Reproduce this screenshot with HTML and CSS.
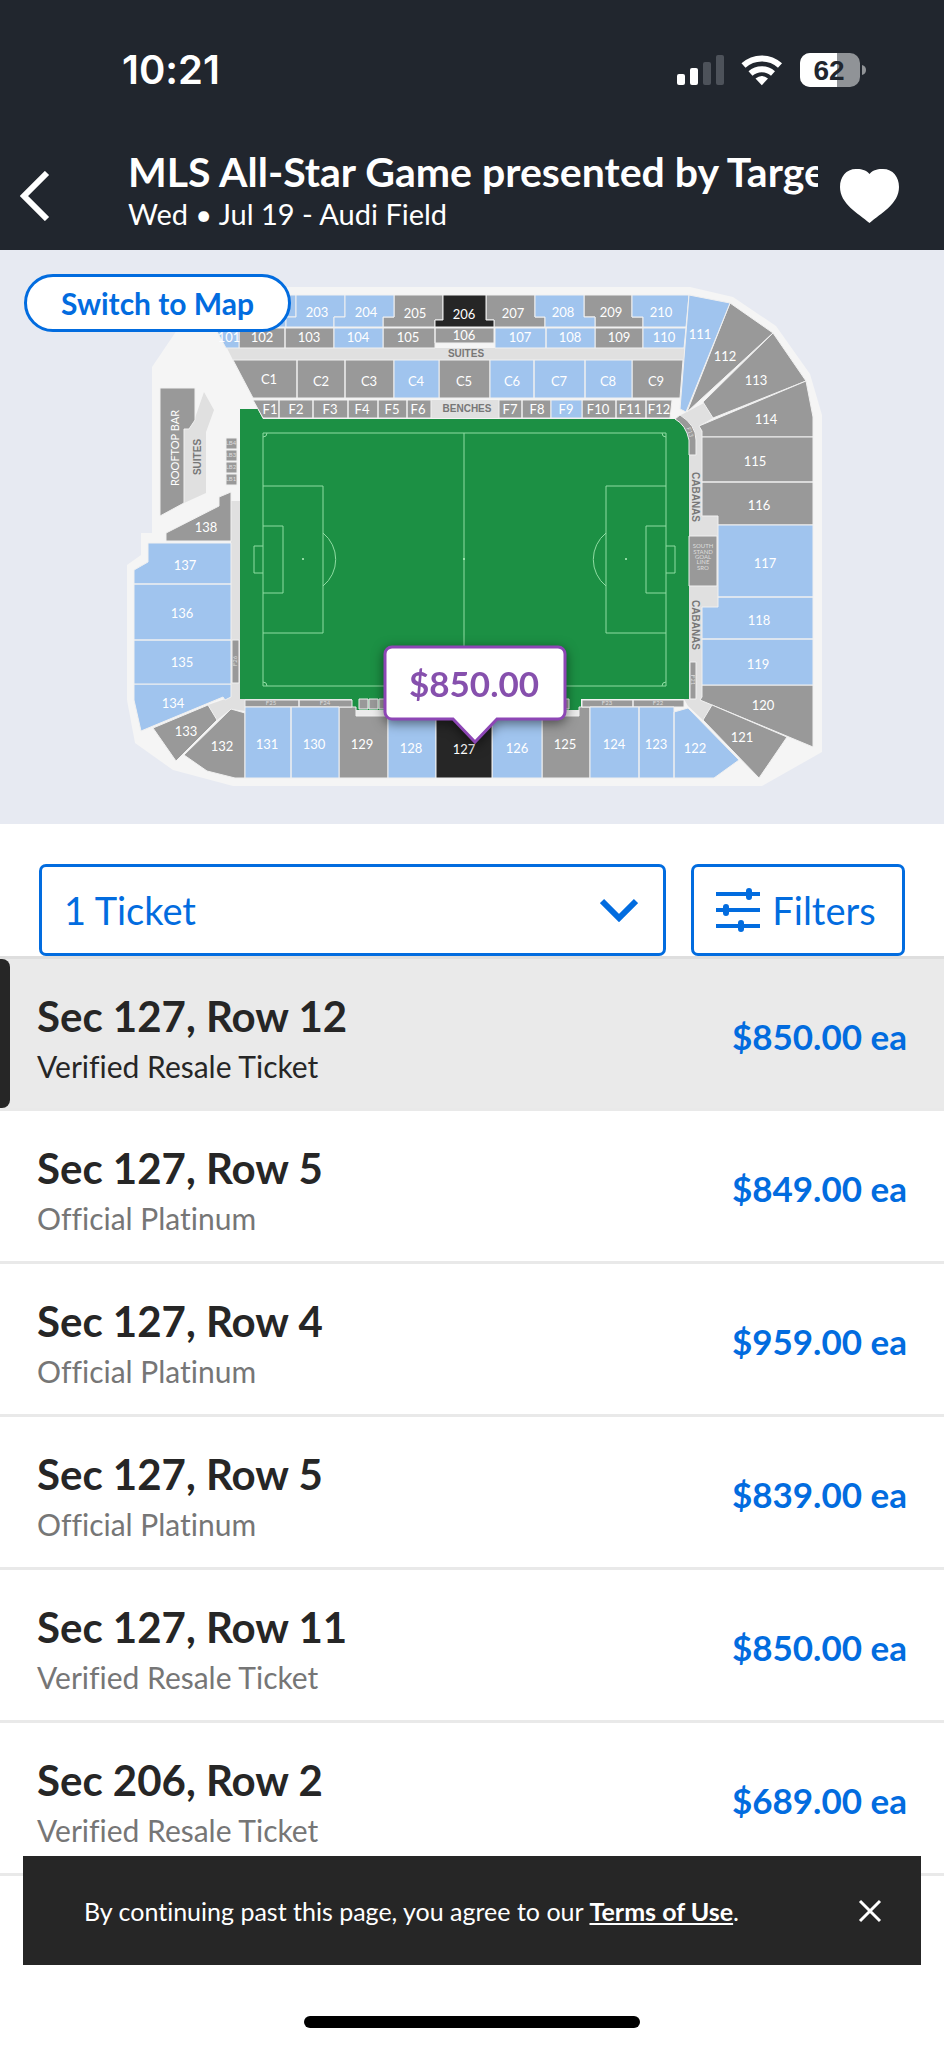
FILE: index.html
```
<!DOCTYPE html>
<html lang="en">
<head>
    <meta charset="UTF-8">
    <meta name="viewport" content="width=device-width, initial-scale=1.0">
    <title>MLS All-Star Game presented by Target</title>
    <link rel="stylesheet" href="styles.css">
</head>
<body>
    <header class="top">
        <div class="status">
            <span class="clock">10:21</span>
            <svg class="status-icons" width="190" height="36" viewBox="677 52 190 36">
                <rect x="677" y="74" width="8" height="11" rx="2" fill="#fff"/>
                <rect x="690" y="68" width="8" height="17" rx="2" fill="#fff"/>
                <rect x="703" y="62" width="8" height="23" rx="2" fill="#4d525a"/>
                <rect x="716" y="55" width="8" height="30" rx="2" fill="#4d525a"/>
                <g fill="none" stroke="#fff" stroke-width="6">
                    <path d="M743.500 65.500a27 27 0 0 1 36.500 0"/>
                    <path d="M750.500 73.500a17 17 0 0 1 22.500 0"/>
                </g>
                <path d="M755.500 78.500q6.200-5 12.500 0l-6.200 6.800z" fill="#fff"/>
                <rect x="800" y="53" width="60" height="34" rx="10" fill="#909397"/>
                <path d="M810 53h27v34h-27a10 10 0 0 1-10-10v-14a10 10 0 0 1 10-10z" fill="#fff"/>
                <path d="M862 65q4 1 4 5t-4 5z" fill="#909397"/>
                <text class="battery" x="829" y="80">62</text>
            </svg>
        </div>
        <div class="bar">
            <button class="icon-button" type="button" aria-label="Back">
                <svg width="30" height="50" viewBox="0 0 30 50"><path d="M27 2 4 25l23 23" fill="none" stroke="#fff" stroke-width="6"/></svg>
            </button>
            <div class="event">
                <h1>MLS All-Star Game presented by Target</h1>
                <p>Wed • Jul 19 - Audi Field</p>
            </div>
            <button class="icon-button" type="button" aria-label="Favorite">
                <svg width="60" height="54" viewBox="0 0 60 54"><path d="M29.500 5C25 0 20 0 16 0 6 0 0 8 0 18 0 35 18 44 29.500 54 41 44 59 35 59 18 59 8 53 0 43 0 39 0 34 0 29.500 5z" fill="#fff"/></svg>
            </button>
        </div>
    </header>

    <section class="map">
        <svg class="seats" viewBox="0 250 944 574" role="img" aria-label="Audi Field seat map">
            <!-- stadium outline -->
            <path class="ground" d="M200 287H690L733 297 776 326 810 374 822 415V752L762 786H233L173 770 135 743 127 700V565L141 555V533H152V367L175 333z"/>

            <!-- suites, benches and cabanas -->
            <g class="lounge">
                <path d="M227 348H684V360H233zM431 400H499V418H431z"/>
                <path d="M204 392 214 410 206 432V493L184 503V430L195 418z"/>
                <path d="M231 501H240V699H352V716H245V711L231 709 217 720 208 705 231 697z"/>
                <path d="M677 417 704 403 713 418 699 426 702 432V516H718V607H702V697L700 700 712 705 703 720 688 706 684 699H689V441z"/>
            </g>

            <!-- pitch -->
            <path class="grass" d="M240 409H258L263 419H675Q689 425 689 441V699H581V710H352V699H240z"/>
            <path class="apron" d="M356 710H579V716H356z"/>
            <g class="lines">
                <path d="M263 433H666V686H263zM464 433V686"/>
                <path d="M263 486H323V633H263M263 526H283V593H263M263 546H254V573H263M323 533a34 34 0 0 1 0 53"/>
                <path d="M666 486H606V633H666M666 526H646V593H666M666 546H675V573H666M606 533a34 34 0 0 0 0 53"/>
                <path d="M263 437a4 4 0 0 0 4-4M662 433a4 4 0 0 0 4 4M263 682a4 4 0 0 1 4 4M662 686a4 4 0 0 1 4-4"/>
            </g>
            <g fill="#b5f0c0">
                <circle cx="303" cy="559" r="1"/>
                <circle cx="464" cy="559" r="1"/>
                <circle cx="626" cy="559" r="1"/>
            </g>

            <g class="sold">
                <path d="M394 295H443V320H435V327H383V317H394z"/>
                <path d="M486 295H535V317H545V327H494V320H486z"/>
                <path d="M584 295H632V317H643V327H595V317H584z"/>
                <path d="M239 328H285V348H239zM285 328H334V348H285zM383 328H435V348H383zM435 328H494V343H435zM595 328H643V348H595z"/>
                <path d="M233 360H297V398H253zM297 360H345V398H297zM345 360H394V398H345zM439 360H490V398H439zM632 360H683L680 398H632z"/>
                <path d="M253 400H279V418H263zM279 400H313V418H279zM313 400H348V418H313zM348 400H378V418H348zM378 400H407V418H378zM407 400H431V418H407z"/>
                <path d="M499 400H522V418H499zM522 400H551V418H522zM582 400H616V418H582zM616 400H646V418H616zM646 400H672L670 418H646z"/>
                <path d="M730 303 773 333 687 412z"/>
                <path d="M773 333 806 381 713 418 703 402z"/>
                <path d="M806 381 813 417V437H702V431L699 426z"/>
                <path d="M702 437H813V482H702zM702 482H813V525H718V516H702z"/>
                <path d="M702 685H813V747L700 700 702 697z"/>
                <path d="M712 705 787 737 759 778 703 720z"/>
                <path d="M542 716H579V707H590V778H542z"/>
                <path d="M339 707H356V716H388V778H339z"/>
                <path d="M231 709 245 713V778H235L207 771 184 755z"/>
                <path d="M208 705 217 720 176 761 153 728z"/>
                <path d="M231 541H166V533L219 506V497L231 492z"/>
                <path d="M160 388H195V420L189 429H184V503L160 516z"/>
                <path d="M226 438H237V449H226zM226 450H237V461H226zM226 462H237V473H226zM226 474H237V485H226z"/>
                <path d="M232 640H239V683H232zM245 700H299V707H245zM299 700H352V707H299zM582 700H633V707H582zM633 700H684V707H633z"/>
                <path d="M359 699H368V709H359zM369 699H378V709H369zM379 699H388V709H379zM560 699H569V709H560z"/>
                <path d="M689 536H717V586H689zM690 662H696V699H690z"/>
                <path d="M680 415Q696 425 696 440V455H689V440Q686 425 675 419z"/>
            </g>
            <g class="open">
                <path d="M250 295H296V317H286V327H250z"/>
                <path d="M296 295H345V317H334V327H286V317H296z"/>
                <path d="M345 295H394V317H383V327H334V317H345z"/>
                <path d="M535 295H584V317H595V327H545V317H535z"/>
                <path d="M632 295H689L686 327H643V317H632z"/>
                <path d="M215 328H239V348H226zM334 328H383V348H334zM495 328H546V348H495zM546 328H595V348H546zM643 328H686L684 348H643z"/>
                <path d="M394 360H439V398H394zM490 360H534V398H490zM534 360H585V398H534zM585 360H632V398H585zM551 400H582V418H551z"/>
                <path d="M689 295 730 303 686 412 680 409z"/>
                <path d="M718 525H813V597H718zM718 597H813V639H702V607H718zM702 639H813V685H702z"/>
                <path d="M674 712 688 708 739 760 714 778H674zM639 707H674V778H639zM590 707H639V778H590z"/>
                <path d="M492 716H542V778H492zM388 716H436V778H388zM291 707H339V778H291zM245 707H291V778H245z"/>
                <path d="M134 684H231V697L225 700 223 697 141 731 134 700z"/>
                <path d="M134 640H231V684H134zM134 584H231V640H134zM148 543H231V584H134V570L148 562z"/>
            </g>
            <g class="picked">
                <path d="M443 295H486V320H494V327H435V320H443z"/>
                <path d="M436 716H492V778H436z"/>
            </g>

            <g class="labels">
                <text x="317" y="317">203</text><text x="366" y="317">204</text><text x="415" y="318">205</text>
                <text x="464" y="319">206</text><text x="513" y="318">207</text><text x="563" y="317">208</text>
                <text x="611" y="317">209</text><text x="661" y="317">210</text>
                <text x="229" y="342">101</text><text x="262" y="342">102</text><text x="309" y="342">103</text>
                <text x="358" y="342">104</text><text x="408" y="342">105</text><text x="464" y="340">106</text>
                <text x="520" y="342">107</text><text x="570" y="342">108</text><text x="619" y="342">109</text>
                <text x="664" y="342">110</text>
                <text x="269" y="384">C1</text><text x="321" y="386">C2</text><text x="369" y="386">C3</text>
                <text x="416" y="386">C4</text><text x="464" y="386">C5</text><text x="512" y="386">C6</text>
                <text x="559" y="386">C7</text><text x="608" y="386">C8</text><text x="656" y="386">C9</text>
                <text x="270" y="414">F1</text><text x="296" y="414">F2</text><text x="330" y="414">F3</text>
                <text x="362" y="414">F4</text><text x="392" y="414">F5</text><text x="418" y="414">F6</text>
                <text x="510" y="414">F7</text><text x="537" y="414">F8</text><text x="566" y="414">F9</text>
                <text x="598" y="414">F10</text><text x="630" y="414">F11</text><text x="659" y="414">F12</text>
                <text x="700" y="339">111</text><text x="725" y="361">112</text><text x="756" y="385">113</text>
                <text x="766" y="424">114</text><text x="755" y="466">115</text><text x="759" y="510">116</text>
                <text x="765" y="568">117</text><text x="759" y="625">118</text><text x="758" y="669">119</text>
                <text x="763" y="710">120</text><text x="742" y="742">121</text><text x="695" y="753">122</text>
                <text x="656" y="749">123</text><text x="614" y="749">124</text><text x="565" y="749">125</text>
                <text x="517" y="753">126</text><text x="464" y="754">127</text><text x="411" y="753">128</text>
                <text x="362" y="749">129</text><text x="314" y="749">130</text><text x="267" y="749">131</text>
                <text x="222" y="751">132</text><text x="186" y="736">133</text><text x="173" y="708">134</text>
                <text x="182" y="667">135</text><text x="182" y="618">136</text><text x="185" y="570">137</text>
                <text x="206" y="532">138</text>
                <text class="rooftop" transform="translate(179 448) rotate(-90)">ROOFTOP BAR</text>
            </g>
            <g class="places">
                <text x="466" y="357">SUITES</text>
                <text x="467" y="412">BENCHES</text>
                <text transform="translate(201 457) rotate(-90)">SUITES</text>
                <text transform="translate(692 497) rotate(90)">CABANAS</text>
                <text transform="translate(692 625) rotate(90)">CABANAS</text>
            </g>
            <g class="tiny">
                <text x="231" y="445">LB4</text><text x="231" y="457">LB3</text><text x="231" y="469">LB2</text><text x="231" y="481">LB1</text>
                <text x="271" y="705">F25</text><text x="325" y="705">F24</text><text x="607" y="705">F23</text><text x="658" y="705">F22</text>
                <text transform="translate(237 661) rotate(-90)">F26</text>
                <text transform="translate(691 680) rotate(90)">F21</text>
                <text transform="translate(688 433) rotate(70)">F13</text>
                <text x="703" y="548">SOUTH</text><text x="703" y="554">STAND</text><text x="703" y="559">GOAL</text>
                <text x="703" y="564">LINE</text><text x="703" y="570">SRO</text>
            </g>

            <g class="price-pin">
                <path d="M392 647H558a7 7 0 0 1 7 7V712a7 7 0 0 1-7 7H497L475 742 453 719H392a7 7 0 0 1-7-7V654a7 7 0 0 1 7-7z"/>
                <text x="474" y="697">$850.00</text>
            </g>
        </svg>
        <button class="map-switch" type="button">Switch to Map</button>
    </section>

    <main>
        <form class="controls">
            <div class="quantity">
                <select aria-label="Number of tickets">
                    <option>1 Ticket</option>
                    <option>2 Tickets</option>
                    <option>3 Tickets</option>
                    <option>4 Tickets</option>
                </select>
                <svg class="chevron" width="38" height="24" viewBox="0 0 38 24"><path d="M2 3 19 20 36 3" fill="none" stroke="#026cdf" stroke-width="6"/></svg>
            </div>
            <button class="filters" type="button">
                <svg width="44" height="44" viewBox="0 0 44 44" fill="none" stroke="#026cdf" stroke-width="4">
                    <path d="M0 6h44M0 22h44M0 38h44"/>
                    <path d="M33 3v6M10 19v6M25 35v6" stroke-width="6" stroke-linecap="round"/>
                </svg>
                Filters
            </button>
        </form>

        <ul class="tickets">
            <li class="selected">
                <div><h2>Sec 127, Row 12</h2><p>Verified Resale Ticket</p></div>
                <span class="price">$850.00 ea</span>
            </li>
            <li>
                <div><h2>Sec 127, Row 5</h2><p>Official Platinum</p></div>
                <span class="price">$849.00 ea</span>
            </li>
            <li>
                <div><h2>Sec 127, Row 4</h2><p>Official Platinum</p></div>
                <span class="price">$959.00 ea</span>
            </li>
            <li>
                <div><h2>Sec 127, Row 5</h2><p>Official Platinum</p></div>
                <span class="price">$839.00 ea</span>
            </li>
            <li>
                <div><h2>Sec 127, Row 11</h2><p>Verified Resale Ticket</p></div>
                <span class="price">$850.00 ea</span>
            </li>
            <li>
                <div><h2>Sec 206, Row 2</h2><p>Verified Resale Ticket</p></div>
                <span class="price">$689.00 ea</span>
            </li>
        </ul>
    </main>

    <div class="terms">
        <p>By continuing past this page, you agree to our <a href="#terms">Terms of Use</a>.</p>
        <button class="icon-button" type="button" aria-label="Close">
            <svg width="24" height="24" viewBox="0 0 24 24"><path d="M2 2l20 20M22 2 2 22" fill="none" stroke="#fff" stroke-width="3"/></svg>
        </button>
    </div>
    <div class="home-bar"></div>
</body>
</html>
```
FILE: styles.css
```
* {
    box-sizing: border-box;
}

body {
    margin: 0;
    min-height: 100vh;
    background-color: #fff;
    color: #262626;
    font-family: Lato, 'Open Sans', sans-serif;
    font-variant-ligatures: none;
}

h1, h2, p {
    margin: 0;
}

button {
    font-family: inherit;
    cursor: pointer;
}

.icon-button {
    display: flex;
    padding: 0;
    border: none;
    background: none;
}

/* Header */
.top {
    background-color: #21262e;
    color: #fff;
}

.status {
    display: flex;
    justify-content: space-between;
    align-items: center;
    padding: 48px 77px 0 122px;
}

.clock {
    font-family: Inter, sans-serif;
    font-size: 40px;
    font-weight: 600;
    line-height: 44px;
}

.battery {
    font: bold 28px 'Liberation Sans', sans-serif;
    fill: #21262e;
    text-anchor: middle;
}

.bar {
    display: flex;
    align-items: center;
    padding: 56px 44px 18px 20px;
}

.bar .icon-button {
    flex-shrink: 0;
    padding-top: 12px;
}

.event {
    flex: 1;
    min-width: 0;
    margin: 0 22px 0 78px;
}

.event h1 {
    overflow: hidden;
    white-space: nowrap;
    font-size: 41px;
    font-weight: 700;
    line-height: 48px;
}

.event p {
    font-size: 29px;
    line-height: 36px;
}

/* Seat map */
.map {
    position: relative;
    background-color: #e7eaf2;
}

.seats {
    display: block;
    width: 100%;
}

.map-switch {
    position: absolute;
    top: 24px;
    left: 24px;
    width: 267px;
    height: 58px;
    border: 3px solid #026cdf;
    border-radius: 29px;
    background-color: #fff;
    color: #026cdf;
    font-size: 30px;
    font-weight: 700;
}

.ground {
    fill: #f5f5f5;
}

.lounge {
    fill: #e0e0e0;
}

.apron {
    fill: #ebebeb;
}

.grass {
    fill: #1c9044;
}

.lines {
    fill: none;
    stroke: #8fdca2;
}

.sold,
.open,
.picked {
    stroke: #f0f0f0;
}

.sold {
    fill: #999;
}

.open {
    fill: #a0c4ee;
}

.picked {
    fill: #262626;
}

.labels {
    fill: #fff;
    font-size: 13px;
    text-anchor: middle;
}

.labels .rooftop {
    font-size: 11px;
}

.places {
    fill: #777;
    font: bold 10px 'Liberation Sans', sans-serif;
    text-anchor: middle;
}

.tiny {
    fill: #ddd;
    font-size: 6px;
    text-anchor: middle;
}

.price-pin {
    filter: drop-shadow(0 3px 6px rgba(0, 0, 0, 0.5));
}

.price-pin path {
    fill: #fff;
    stroke: #8d46b5;
    stroke-width: 3;
}

.price-pin text {
    fill: #8650ad;
    font-size: 35px;
    font-weight: 700;
    text-anchor: middle;
}

/* Ticket quantity and filters */
.controls {
    display: flex;
    gap: 25px;
    padding: 40px 39px 0;
}

.quantity {
    position: relative;
    flex: 1;
}

.quantity select {
    width: 100%;
    height: 92px;
    padding: 0 22px;
    border: 3px solid #026cdf;
    border-radius: 7px;
    background-color: #fff;
    color: #026cdf;
    font-family: inherit;
    font-size: 38px;
    appearance: none;
}

.chevron {
    position: absolute;
    top: 34px;
    right: 28px;
    pointer-events: none;
}

.filters {
    display: flex;
    justify-content: center;
    align-items: center;
    gap: 12px;
    width: 214px;
    height: 92px;
    padding: 0 4px 0 0;
    border: 3px solid #026cdf;
    border-radius: 7px;
    background-color: #fff;
    color: #026cdf;
    font-size: 38px;
}

/* Ticket list */
.tickets {
    margin: 0;
    padding: 0;
    list-style: none;
}

.tickets li {
    display: flex;
    justify-content: space-between;
    align-items: center;
    height: 153px;
    padding: 4px 37px 0;
    border-bottom: 3px solid #e9e9e9;
}

.tickets .selected {
    position: relative;
    height: 155px;
    border-top: 3px solid #dedede;
    background-color: #eaeaea;
}

.selected::before {
    content: '';
    position: absolute;
    top: 0;
    bottom: 0;
    left: 0;
    width: 10px;
    border-radius: 0 8px 8px 0;
    background-color: #262626;
}

.tickets h2 {
    padding-top: 4px;
    font-size: 42px;
    font-weight: 700;
    line-height: 56px;
}

.tickets p {
    color: #767676;
    font-size: 30px;
    line-height: 44px;
}

.tickets .selected p {
    color: #262626;
}

.price {
    color: #026cdf;
    font-size: 35px;
    font-weight: 700;
}

/* Terms notice */
.terms {
    position: fixed;
    right: 23px;
    bottom: 83px;
    left: 23px;
    display: flex;
    justify-content: space-between;
    align-items: center;
    height: 109px;
    padding: 0 39px 0 61px;
    background-color: #262626;
    color: #fff;
    font-size: 25px;
}

.terms a {
    color: #fff;
    font-weight: 700;
}

.home-bar {
    position: fixed;
    bottom: 20px;
    left: 50%;
    width: 336px;
    height: 12px;
    margin-left: -168px;
    border-radius: 6px;
    background-color: #000;
}
```
